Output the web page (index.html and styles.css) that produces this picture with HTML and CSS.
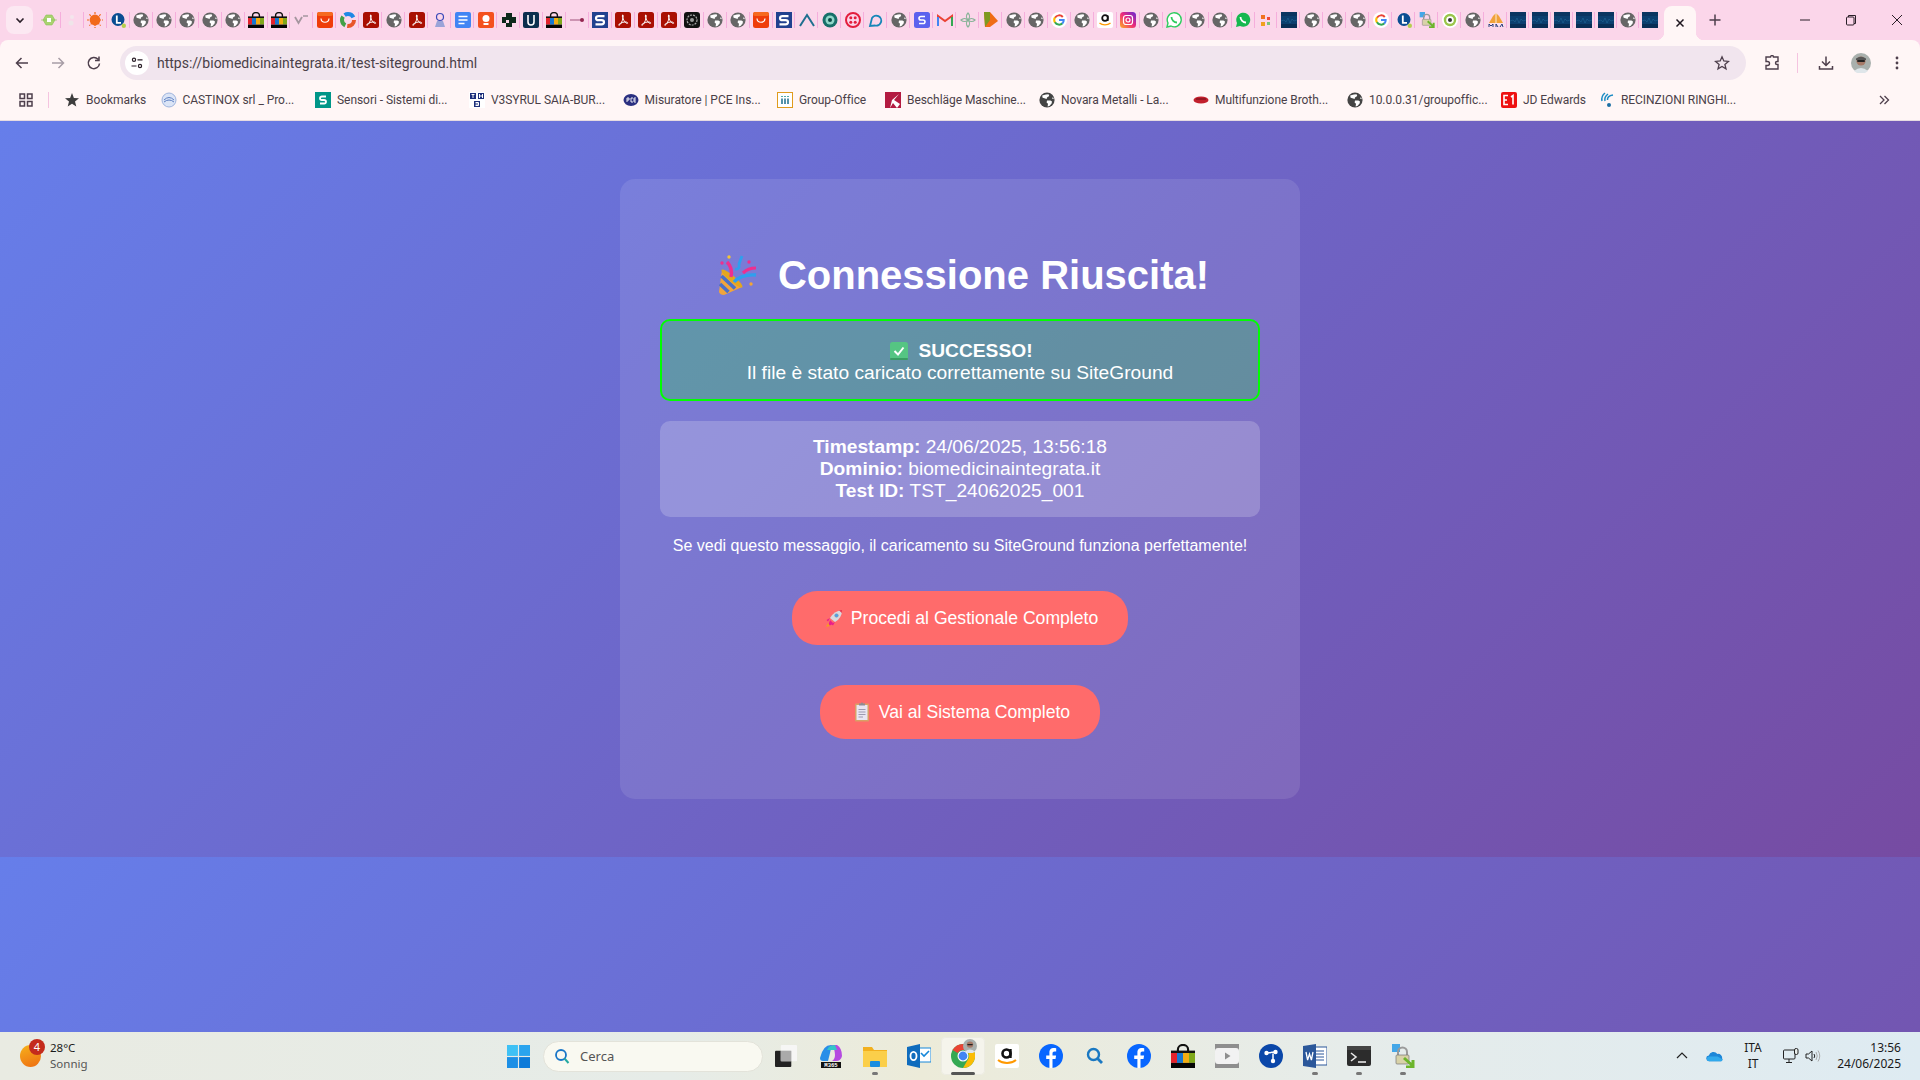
FILE: index.html
```html
<!DOCTYPE html>
<html lang="it">
<head>
<meta charset="utf-8">
<title>Test SiteGround</title>
<link rel="stylesheet" href="styles.css">
</head>
<body>
<svg class="defs" aria-hidden="true">
<defs>
<symbol id="globe" viewBox="0 0 16 16"><circle cx="8" cy="8" r="7.6" fill="currentColor"/><path d="M3.2 3.6 6.8 2.6 9.6 2.2 10.2 4 8 5.4 7.6 7 5.4 6.2 3.6 5.8Z M8 8.4 11.4 8.6 13 9.6 12.6 11.6 10.4 14 8.6 14.4 9 11.8 7.6 10.4Z M14 5 14.8 7.2 13 6.6Z" fill="#fff"/></symbol>
<symbol id="bag" viewBox="0 0 16 16"><path d="M4.6 5V3.6a3.4 3 0 0 1 6.8 0V5" fill="none" stroke="#111" stroke-width="1.4"/><rect y="4.4" width="16" height="2" fill="#111"/><rect y="6" width="4" height="6.6" fill="#e3222c"/><rect x="4" y="6" width="4" height="6.6" fill="#1677d2"/><rect x="8" y="6" width="4" height="6.6" fill="#f2ad12"/><rect x="12" y="6" width="4" height="6.6" fill="#7fa81b"/><rect y="12.6" width="16" height="3.4" fill="#050505"/></symbol>
<symbol id="pdf" viewBox="0 0 16 16"><rect width="16" height="16" rx="2.5" fill="#a90f02"/><path d="M7.6 3c-.8 1 .2 3.6 1.4 5.6 1 1.6 2.4 3 3.4 2.8.8-.2.2-1.2-1.4-1.4-2.4-.2-5.4.8-7 2.4-1 1 .2 1.2 1 .2C7 11 8.4 5.600 8.200 3.600 8.100 2.800 7.900 2.700 7.600 3Z" fill="none" stroke="#fff" stroke-width="1"/></symbol>
<symbol id="ali" viewBox="0 0 16 16"><rect width="16" height="16" rx="2.5" fill="#ef3d0a"/><rect width="16" height="4" rx="2" fill="#f66a1f"/><path d="M4 6.500c.4 5 7.600 5 8 0" fill="none" stroke="#fff" stroke-width="1.200"/></symbol>
<symbol id="s" viewBox="0 0 16 16"><rect width="16" height="16" fill="#21418f"/><path d="M12.500 4.200H6.500Q4 4.200 4 6.200T6.500 8.200H9.500Q12 8.200 12 10.200T9.500 12.400H3.500" fill="none" stroke="#fff" stroke-width="2.200"/></symbol>
<symbol id="wave" viewBox="0 0 16 16"><rect width="16" height="16" fill="#0b3f6f"/><path d="M0 9 3 8 5 10 7 6 9 11 11 7 13 9 16 8" fill="none" stroke="#2a7fb0" stroke-width=".5" opacity=".7"/><rect y="0" width="16" height="4" fill="#0a2f58" opacity=".6"/><rect y="12" width="16" height="4" fill="#072a50" opacity=".8"/></symbol>
<symbol id="gg" viewBox="0 0 16 16"><circle cx="8" cy="8" r="8" fill="#fff"/><path d="M11.800 5A4.800 4.800 0 0 0 4 5.800" fill="none" stroke="#ea4335" stroke-width="2"/><path d="M4 5.400A4.800 4.800 0 0 0 4 10.600" fill="none" stroke="#fbbc05" stroke-width="2"/><path d="M4 10.200A4.800 4.800 0 0 0 11.500 11.300" fill="none" stroke="#34a853" stroke-width="2"/><path d="M8 8h4.700a4.800 4.800 0 0 1-1.400 3.600" fill="none" stroke="#4285f4" stroke-width="2"/></symbol>
<symbol id="ell" viewBox="0 0 16 16"><path d="M8 1A6.500 6.500 0 1 0 8 14 6.500 6.500 0 0 0 8 1Z" fill="#0a4d92"/><path d="M6.800 3.500V10.800H11" fill="none" stroke="#fff" stroke-width="1.800"/><circle cx="13.800" cy="13.800" r="2.200" fill="#b6cf4d"/></symbol>
<symbol id="fb" viewBox="0 0 24 24"><circle cx="12" cy="12" r="12" fill="#0866ff"/><path d="M13.500 24v-9h3l.6-3.600h-3.600V9.400c0-1.200.6-2 2-2h1.700V4.300c-3.600-.8-6.800-.2-6.800 4.400v2.700H7.200V15h3.200v9Z" fill="#fff"/></symbol>
<symbol id="lockico" viewBox="0 0 24 24"><rect x="1" y="0" width="8" height="8" fill="#44a7e8"/><path d="M7 11V8a4.500 4.500 0 0 1 9 0v3" fill="none" stroke="#9a9a9a" stroke-width="2"/><rect x="5" y="11" width="13" height="9" rx="1" fill="#d8d2a8" stroke="#777" stroke-width=".7"/><path d="M13 14 22 22M22 16V23H15" fill="none" stroke="#6cb52c" stroke-width="3"/></symbol>
</defs>
</svg>

<div class="frame">
  <header class="tabstrip">
    <button class="tabsearch" type="button"><svg class="ico12" viewBox="0 0 12 12"><path d="M2.500 4.500 6 8l3.500-3.500" fill="none" stroke="#2a1f28" stroke-width="1.600"/></svg></button>
    <div class="tabs">
      <span class="tab"><svg class="fav" viewBox="0 0 16 16"><path d="M0 8h16M5 3h6l3 5-3 5H5L2 8Z" fill="#a9d36f" stroke="#8cc157" stroke-width=".6"/><rect x="6" y="6" width="4" height="4" fill="#fff"/></svg></span>
      <span class="tab"><svg class="fav" viewBox="0 0 16 16"><circle cx="8" cy="5" r="2" fill="#f3e6ec"/><circle cx="7" cy="11" r="2.500" fill="#efe5e9"/></svg></span>
      <span class="tab"><svg class="fav" viewBox="0 0 16 16"><circle cx="8" cy="8" r="5.400" fill="#f26a1b"/><path d="M8 0v16M0 8h16M2.400 2.400l11.200 11.200M13.600 2.400 2.400 13.600" stroke="#f26a1b" stroke-width="1.200" stroke-dasharray="2 1"/></svg></span>
      <span class="tab"><svg class="fav"><use href="#ell"/></svg></span>
      <span class="tab"><svg class="fav globe"><use href="#globe"/></svg></span>
      <span class="tab"><svg class="fav globe"><use href="#globe"/></svg></span>
      <span class="tab"><svg class="fav globe"><use href="#globe"/></svg></span>
      <span class="tab"><svg class="fav globe"><use href="#globe"/></svg></span>
      <span class="tab"><svg class="fav globe"><use href="#globe"/></svg></span>
      <span class="tab"><svg class="fav"><use href="#bag"/></svg></span>
      <span class="tab"><svg class="fav"><use href="#bag"/></svg></span>
      <span class="tab"><svg class="fav" viewBox="0 0 16 16"><path d="M1 5l3.500 6L8 5" fill="none" stroke="#a5969f" stroke-width="1.800"/><path d="M9 4h5" stroke="#a5969f" stroke-width="1.500"/></svg></span>
      <span class="tab"><svg class="fav"><use href="#ali"/></svg></span>
      <span class="tab"><svg class="fav" viewBox="0 0 16 16"><circle cx="8" cy="8" r="6" fill="none" stroke="#e8562a" stroke-width="4" stroke-dasharray="10 28"/><circle cx="8" cy="8" r="6" fill="none" stroke="#43a047" stroke-width="4" stroke-dasharray="10 28" stroke-dashoffset="-12"/><circle cx="8" cy="8" r="6" fill="none" stroke="#1e88e5" stroke-width="4" stroke-dasharray="10 28" stroke-dashoffset="-24"/></svg></span>
      <span class="tab"><svg class="fav"><use href="#pdf"/></svg></span>
      <span class="tab"><svg class="fav globe"><use href="#globe"/></svg></span>
      <span class="tab"><svg class="fav"><use href="#pdf"/></svg></span>
      <span class="tab"><svg class="fav" viewBox="0 0 16 16"><circle cx="8" cy="5" r="3.500" fill="none" stroke="#3a49b8" stroke-width="1.200"/><path d="M5 9h6l2 6H3Z" fill="#9aa3d8"/></svg></span>
      <span class="tab"><svg class="fav" viewBox="0 0 16 16"><rect width="16" height="16" rx="2" fill="#4285f4"/><path d="M3.500 4.500h9M3.500 8h9M3.500 11.500h6" stroke="#fff" stroke-width="1.500"/></svg></span>
      <span class="tab"><svg class="fav" viewBox="0 0 16 16"><rect width="16" height="16" rx="2" fill="#f4511e"/><circle cx="8" cy="6.500" r="3.500" fill="#fff"/><rect x="5.500" y="11" width="5" height="2" fill="#fff"/></svg></span>
      <span class="tab"><svg class="fav" viewBox="0 0 16 16"><path d="M5 1h6v4h4v6h-4v4H5v-4h3V8H5v3H1V5h4Z" fill="#0e2a1c"/></svg></span>
      <span class="tab"><svg class="fav" viewBox="0 0 16 16"><rect width="16" height="16" rx="2" fill="#0b2f4e"/><path d="M5 3v7a3 3 0 0 0 6 0V3" fill="none" stroke="#fff" stroke-width="1.600"/></svg></span>
      <span class="tab"><svg class="fav"><use href="#bag"/></svg></span>
      <span class="tab"><svg class="fav" viewBox="0 0 16 16"><path d="M1 8h11" stroke="#b0688c" stroke-width="1.200"/><circle cx="13" cy="8" r="2" fill="#93244f"/></svg></span>
      <span class="tab"><svg class="fav"><use href="#s"/></svg></span>
      <span class="tab"><svg class="fav"><use href="#pdf"/></svg></span>
      <span class="tab"><svg class="fav"><use href="#pdf"/></svg></span>
      <span class="tab"><svg class="fav"><use href="#pdf"/></svg></span>
      <span class="tab"><svg class="fav" viewBox="0 0 16 16"><rect width="16" height="16" rx="3" fill="#111"/><circle cx="8" cy="8" r="5" fill="none" stroke="#aaa" stroke-width="1.200" stroke-dasharray="2 1"/><circle cx="8" cy="8" r="2" fill="#999"/></svg></span>
      <span class="tab"><svg class="fav globe"><use href="#globe"/></svg></span>
      <span class="tab"><svg class="fav globe"><use href="#globe"/></svg></span>
      <span class="tab"><svg class="fav"><use href="#ali"/></svg></span>
      <span class="tab"><svg class="fav"><use href="#s"/></svg></span>
      <span class="tab"><svg class="fav" viewBox="0 0 16 16"><path d="M1 14 8 3l7 11" fill="none" stroke="#1f6f8f" stroke-width="2"/></svg></span>
      <span class="tab"><svg class="fav" viewBox="0 0 16 16"><circle cx="8" cy="8" r="7.500" fill="#16706a"/><circle cx="8" cy="8" r="4.500" fill="#8fd8c9"/><circle cx="8" cy="8" r="2" fill="#0a4b46"/></svg></span>
      <span class="tab"><svg class="fav" viewBox="0 0 16 16"><circle cx="8" cy="8" r="7" fill="none" stroke="#e31e3d" stroke-width="2"/><circle cx="5.800" cy="5.800" r="1.500" fill="#e31e3d"/><circle cx="10.200" cy="5.800" r="1.500" fill="#e31e3d"/><circle cx="5.800" cy="10.200" r="1.500" fill="#e31e3d"/><circle cx="10.200" cy="10.200" r="1.500" fill="#e31e3d"/></svg></span>
      <span class="tab"><svg class="fav" viewBox="0 0 16 16"><path d="M2 14 4 6a5 5 0 1 1 3 7.500Z" fill="none" stroke="#1686b8" stroke-width="1.800"/></svg></span>
      <span class="tab"><svg class="fav globe"><use href="#globe"/></svg></span>
      <span class="tab"><svg class="fav" viewBox="0 0 16 16"><rect width="16" height="16" rx="2.500" fill="#5b62ee"/><path d="M11 4.500H7Q5 4.500 5 6.200T7 8h2q2 0 2 1.800T9 11.500H5" fill="none" stroke="#fff" stroke-width="1.600"/></svg></span>
      <span class="tab"><svg class="fav" viewBox="0 0 16 16"><path d="M1 14V4l7 5 7-5v10" fill="none" stroke="#ea4335" stroke-width="2"/><path d="M1 14V5" stroke="#4285f4" stroke-width="2"/><path d="M15 14V5" stroke="#34a853" stroke-width="2"/></svg></span>
      <span class="tab"><svg class="fav" viewBox="0 0 16 16"><g fill="none" stroke="#88b398" stroke-width="1.200"><path d="M8 8c-2-2-2-5 0-7 2 2 2 5 0 7Z"/><path d="M8 8c2-2 5-2 7 0-2 2-5 2-7 0Z"/><path d="M8 8c2 2 2 5 0 7-2-2-2-5 0-7Z"/><path d="M8 8c-2 2-5 2-7 0 2-2 5-2 7 0Z"/></g></svg></span>
      <span class="tab"><svg class="fav" viewBox="0 0 16 16"><path d="M1 0h6l8 9-8 6H2Z" fill="#ef6c15"/><path d="M1 0h6v8l-5 7Z" fill="#7d9a20"/></svg></span>
      <span class="tab"><svg class="fav globe"><use href="#globe"/></svg></span>
      <span class="tab"><svg class="fav globe"><use href="#globe"/></svg></span>
      <span class="tab"><svg class="fav"><use href="#gg"/></svg></span>
      <span class="tab"><svg class="fav globe"><use href="#globe"/></svg></span>
      <span class="tab"><svg class="fav" viewBox="0 0 16 16"><rect width="16" height="16" rx="2" fill="#fff"/><circle cx="8" cy="6" r="2.800" fill="none" stroke="#111" stroke-width="1.800"/><path d="M10.800 3.500v5.500" stroke="#111" stroke-width="1.600"/><path d="M2.500 11c3 2.500 8 2.500 11 0" fill="none" stroke="#f90" stroke-width="1.400"/></svg></span>
      <span class="tab"><svg class="fav" viewBox="0 0 16 16"><defs><linearGradient id="ig" x1="0" y1="1" x2="1" y2="0"><stop offset="0" stop-color="#fdb022"/><stop offset=".5" stop-color="#ee2a7b"/><stop offset="1" stop-color="#6228d7"/></linearGradient></defs><rect width="16" height="16" rx="3.500" fill="url(#ig)"/><rect x="3.500" y="3.500" width="9" height="9" rx="2.500" fill="none" stroke="#fff" stroke-width="1.200"/><circle cx="8" cy="8" r="2" fill="none" stroke="#fff" stroke-width="1.200"/></svg></span>
      <span class="tab"><svg class="fav globe"><use href="#globe"/></svg></span>
      <span class="tab"><svg class="fav" viewBox="0 0 16 16"><path d="M1 15l1-4A7 7 0 1 1 5 14Z" fill="#fff" stroke="#2ecc5f" stroke-width="1.400"/><path d="M5.500 5c0 3 2.500 5.500 5.500 5.500" fill="none" stroke="#2ecc5f" stroke-width="1.800"/></svg></span>
      <span class="tab"><svg class="fav globe"><use href="#globe"/></svg></span>
      <span class="tab"><svg class="fav globe"><use href="#globe"/></svg></span>
      <span class="tab"><svg class="fav" viewBox="0 0 16 16"><path d="M1 15l1-4A7 7 0 1 1 5 14Z" fill="#16b84f"/><path d="M5.500 5c0 3 2.500 5.500 5.500 5.500" fill="none" stroke="#fff" stroke-width="1.800"/></svg></span>
      <span class="tab"><svg class="fav" viewBox="0 0 16 16"><rect x="3" y="3" width="4" height="4" fill="#f0731f"/><rect x="9" y="5" width="3" height="3" fill="#f04c3a"/><rect x="3" y="10" width="4" height="4" fill="#f0a01f"/><rect x="9" y="10" width="3" height="3" fill="#7bc67b"/></svg></span>
      <span class="tab"><svg class="fav"><use href="#wave"/></svg></span>
      <span class="tab"><svg class="fav globe"><use href="#globe"/></svg></span>
      <span class="tab"><svg class="fav globe"><use href="#globe"/></svg></span>
      <span class="tab"><svg class="fav globe"><use href="#globe"/></svg></span>
      <span class="tab"><svg class="fav"><use href="#gg"/></svg></span>
      <span class="tab"><svg class="fav"><use href="#ell"/></svg></span>
      <span class="tab"><svg class="fav"><use href="#lockico"/></svg></span>
      <span class="tab"><svg class="fav" viewBox="0 0 16 16"><circle cx="8" cy="8" r="8" fill="#fff"/><circle cx="8" cy="8" r="5" fill="none" stroke="#9ac54a" stroke-width="2.400"/><circle cx="8" cy="8" r="2" fill="#333"/></svg></span>
      <span class="tab"><svg class="fav globe"><use href="#globe"/></svg></span>
      <span class="tab"><svg class="fav" viewBox="0 0 16 16"><path d="M1 11 5 4l3-3 3 3 4 7Z" fill="#f0a23a"/><path d="M8 1v10" stroke="#fff" stroke-width=".8"/><rect y="11" width="16" height="4" fill="#fbe0ee"/><path d="M1 15v-3l2 2 2-2v3M8 15V12l2 3M12 15l2-3 1 3" fill="none" stroke="#253a7b" stroke-width="1"/></svg></span>
      <span class="tab tab-n"><svg class="fav"><use href="#wave"/></svg></span>
      <span class="tab tab-n"><svg class="fav"><use href="#wave"/></svg></span>
      <span class="tab tab-n"><svg class="fav"><use href="#wave"/></svg></span>
      <span class="tab tab-n"><svg class="fav"><use href="#wave"/></svg></span>
      <span class="tab tab-n"><svg class="fav"><use href="#wave"/></svg></span>
      <span class="tab tab-n"><svg class="fav globe"><use href="#globe"/></svg></span>
      <span class="tab tab-n"><svg class="fav"><use href="#wave"/></svg></span>
    </div>
    <div class="activetab"><svg class="ico12" viewBox="0 0 12 12"><path d="M2.500 2.500l7 7M9.500 2.500l-7 7" stroke="#1f1720" stroke-width="1.500"/></svg></div>
    <svg class="ico14 newtab" viewBox="0 0 14 14"><path d="M7 1.500v11M1.500 7h11" stroke="#4e3f4c" stroke-width="1.500"/></svg>
    <div class="winctl">
      <svg class="ico12" viewBox="0 0 12 12"><path d="M1 6h10" stroke="#2a1f28"/></svg>
      <svg class="ico12" viewBox="0 0 12 12"><rect x="1.500" y="3" width="7.500" height="8" rx="1" fill="none" stroke="#2a1f28"/><path d="M3.500 3V1.500h7v8H9" fill="none" stroke="#2a1f28"/></svg>
      <svg class="ico12" viewBox="0 0 12 12"><path d="M1 1l10 10M11 1 1 11" stroke="#2a1f28"/></svg>
    </div>
  </header>

  <div class="chrome">
    <nav class="toolbar">
      <div class="navbtns">
        <svg class="ico16" viewBox="0 0 16 16"><path d="M14 8H2.500M7.500 3l-5 5 5 5" fill="none" stroke="#4e3f4c" stroke-width="1.500"/></svg>
        <svg class="ico16" viewBox="0 0 16 16"><path d="M2 8h11.500M8.500 3l5 5-5 5" fill="none" stroke="#a89da6" stroke-width="1.500"/></svg>
        <svg class="ico16" viewBox="0 0 16 16"><path d="M13.500 8.500A5.600 5.600 0 1 1 12 4.200M13 1.500v4H9" fill="none" stroke="#4e3f4c" stroke-width="1.500"/></svg>
      </div>
      <div class="omnibox">
        <span class="siteinfo"><svg class="ico14" viewBox="0 0 14 14"><circle cx="4" cy="3.800" r="1.600" fill="none" stroke="#2a1f28" stroke-width="1.200"/><path d="M7.500 3.800h5M1.500 10h5" stroke="#2a1f28" stroke-width="1.200"/><circle cx="10" cy="10" r="1.600" fill="none" stroke="#2a1f28" stroke-width="1.200"/></svg></span>
        <span class="url">https://biomedicinaintegrata.it/test-siteground.html</span>
        <svg class="ico16 staricon" viewBox="0 0 16 16"><path d="M8 1.800 9.800 6l4.600.4-3.500 3 1.100 4.500L8 11.500l-4 2.400 1.100-4.500-3.500-3L6.200 6Z" fill="none" stroke="#4e3f4c" stroke-width="1.300"/></svg>
      </div>
      <div class="tools">
        <svg class="ico16" viewBox="0 0 16 16"><path d="M2 2h4.500a1.500 1.500 0 0 1 3 0H14v4.500h-1a1.500 1.500 0 0 0 0 3h1V14H2v-3.500h1.500a2 2 0 0 0 0-4H2Z" fill="none" stroke="#4e3f4c" stroke-width="1.400"/></svg>
        <span class="toolsep"></span>
        <svg class="ico16" viewBox="0 0 16 16"><path d="M8 1.500V10M4 6.500 8 10.500l4-4M1.500 11v3h13v-3" fill="none" stroke="#4e3f4c" stroke-width="1.500"/></svg>
        <svg class="avatar" viewBox="0 0 20 20"><circle cx="10" cy="10" r="10" fill="#a9b0ad"/><circle cx="10" cy="8" r="4.600" fill="#a67a68"/><path d="M5 5.500Q10 2 15 5.500V7H5Z" fill="#555"/><rect x="6" y="7" width="8" height="2" rx="1" fill="#222"/><path d="M3 18q7-6 14 0l-3 2H6Z" fill="#dfe6ea"/></svg>
        <svg class="ico16" viewBox="0 0 16 16"><circle cx="8" cy="3" r="1.400" fill="#4e3f4c"/><circle cx="8" cy="8" r="1.400" fill="#4e3f4c"/><circle cx="8" cy="13" r="1.400" fill="#4e3f4c"/></svg>
      </div>
    </nav>
    <div class="bookmarks">
      <svg class="ico14 appsicon" viewBox="0 0 14 14"><path d="M1 1h4.500v4.500H1ZM8.500 1H13v4.500H8.500ZM1 8.500h4.500V13H1ZM8.500 8.500H13V13H8.500Z" fill="none" stroke="#4e3f4c" stroke-width="1.500"/></svg>
      <span class="bmsep"></span>
      <span class="bm w1"><svg class="bmi" viewBox="0 0 16 16"><path d="M8 1 9.900 5.900 15 6.200 11 9.500 12.300 14.500 8 11.700 3.700 14.500 5 9.500 1 6.200 6.100 5.900Z" fill="#3d3d3d"/></svg>Bookmarks</span>
      <span class="bm w2"><svg class="bmi" viewBox="0 0 16 16"><circle cx="8" cy="8" r="7" fill="#dbe4f6" stroke="#9fb4dd"/><path d="M3 8q5-5 10 0M3 10q5-4 10 0" fill="none" stroke="#5d7fc2"/></svg>CASTINOX srl _ Pro...</span>
      <span class="bm w3"><svg class="bmi" viewBox="0 0 16 16"><rect width="16" height="16" fill="#009688"/><path d="M11 4.500H7Q5 4.500 5 6.200T7 8h2q2 0 2 1.800T9 11.500H5" fill="none" stroke="#fff" stroke-width="1.800"/></svg>Sensori - Sistemi di...</span>
      <span class="bm w4"><svg class="bmi" viewBox="0 0 16 16"><rect width="16" height="16" fill="#fff"/><path d="M1 1h6v6H1ZM9 1h6v6H9ZM5 9h6v6H5Z" fill="#1d2f7a"/><path d="M2.500 2.500h3M4 2.500V6M10.500 2v4M13.500 2v4M10.500 4h3M6.500 10.500h3v3h-3M6.500 12h2.500" fill="none" stroke="#fff"/></svg>V3SYRUL SAIA-BUR...</span>
      <span class="bm w5"><svg class="bmi" viewBox="0 0 16 16"><ellipse cx="8" cy="8" rx="7.500" ry="6" fill="#2a2f80"/><path d="M4 6v4M4 6h2v2H4M10 6H8v4h2M13 6h-2v4h2M11 8h2" fill="none" stroke="#fff" stroke-width=".9"/></svg>Misuratore | PCE Ins...</span>
      <span class="bm w6"><svg class="bmi" viewBox="0 0 16 16"><rect x=".5" y=".5" width="15" height="15" fill="#fff" stroke="#e09b1d"/><path d="M5 4v1M8 4v1M11 4v1" stroke="#1d8f8f" stroke-width="1.500"/><path d="M5 6.500V12M8 6.500V12M11 6.500V12" stroke="#1d6f8f" stroke-width="1.500"/></svg>Group-Office</span>
      <span class="bm w7"><svg class="bmi" viewBox="0 0 16 16"><rect width="16" height="16" fill="#b31b41"/><path d="M5 16 7 8 14 2 9 8l6 4-3 4-4-5Z" fill="#fff"/></svg>Beschläge Maschine...</span>
      <span class="bm w8"><svg class="bmi g2"><use href="#globe"/></svg>Novara Metalli - La...</span>
      <span class="bm w9"><svg class="bmi" viewBox="0 0 16 16"><ellipse cx="8" cy="8" rx="7.500" ry="3.600" fill="#c21f2c"/><path d="M3 7h10" stroke="#6d0f18"/></svg>Multifunzione Broth...</span>
      <span class="bm w10"><svg class="bmi g2"><use href="#globe"/></svg>10.0.0.31/groupoffic...</span>
      <span class="bm w11"><svg class="bmi" viewBox="0 0 16 16"><rect width="16" height="16" rx="2" fill="#ee1111"/><path d="M7 3.500H3v9h4M3 8h3M10 5l2-1.500v9" fill="none" stroke="#fff" stroke-width="1.600"/></svg>JD Edwards</span>
      <span class="bm w12"><svg class="bmi" viewBox="0 0 16 16"><path d="M6 1Q2 4 3 9M9 2Q5 5 6 9M14 3Q8 4 8.500 8" fill="none" stroke="#1c8cc4" stroke-width="1.500"/><circle cx="10" cy="13" r="2" fill="#1c6fa4"/></svg>RECINZIONI RINGHI...</span>
      <svg class="ico12 bmmore" viewBox="0 0 12 12"><path d="M2 2l4 4-4 4M6.500 2l4 4-4 4" fill="none" stroke="#4e3f4c" stroke-width="1.300"/></svg>
    </div>
  </div>

  <main class="page">
    <section class="card">
      <h1 class="title"><svg class="emoji-title" viewBox="0 0 38 40"><path d="M0 37 3 15 23 32 5 40Q1 40 0 37Z" fill="#f0a53c"/><path d="M2.500 21 16 33.500M1 29 9.500 37" stroke="#4a70c8" stroke-width="3.600"/><ellipse cx="13" cy="23.500" rx="3" ry="13.500" transform="rotate(-50 13 23.500)" fill="#e3a71e"/><path d="M8 7Q14 13 12 22" fill="none" stroke="#ee2f8f" stroke-width="3.400"/><path d="M24 18q5-5 13-5" fill="none" stroke="#ee2f8f" stroke-width="3.200"/><path d="M15 27q7-8 22-7" fill="none" stroke="#2f9fee" stroke-width="3.400"/><path d="M16 14q5 1 4-5l3-8" fill="none" stroke="#2f9fee" stroke-width="2.800"/><circle cx="10" cy="2" r="1.700" fill="#f4c534"/><circle cx="3" cy="8" r="1.700" fill="#ee2f8f"/><circle cx="30" cy="7" r="1.700" fill="#ee2f8f"/><circle cx="32" cy="29" r="1.700" fill="#f4a534"/></svg> Connessione Riuscita!</h1>
      <div class="success">
        <div class="success-head"><svg class="emoji-check" viewBox="0 0 18 18"><rect width="18" height="18" rx="2.500" fill="#55c583"/><rect y="16" width="18" height="2" rx="1" fill="#3a9c63"/><path d="M4.500 9 8 12.500l5.500-7" fill="none" stroke="#fff" stroke-width="2"/></svg> <strong>SUCCESSO!</strong></div>
        <div>Il file è stato caricato correttamente su SiteGround</div>
      </div>
      <div class="info">
        <div><strong>Timestamp:</strong> 24/06/2025, 13:56:18</div>
        <div><strong>Dominio:</strong> biomedicinaintegrata.it</div>
        <div><strong>Test ID:</strong> TST_24062025_001</div>
      </div>
      <p class="note">Se vedi questo messaggio, il caricamento su SiteGround funziona perfettamente!</p>
      <div class="actions">
        <a class="btn" href="#"><svg class="emoji-btn" viewBox="0 0 18 20"><path d="M5 10Q9 3 17 2q0 8-7 12Z" fill="#d8dadf"/><path d="M14 2.300 17 2l-.2 3Z" fill="#e8344e"/><circle cx="11.500" cy="7.500" r="1.800" fill="#4aa3e8" stroke="#8a93a0" stroke-width=".5"/><path d="M5 10 1.500 12 3 13.500M10 14 8 17.500 6 16" fill="#e91e8c"/><path d="M5 12q2 2 3 3l-2 2-3 1 1-3Z" fill="#e91e8c"/><path d="M3 15 1 19l4-1Z" fill="#f59a23"/></svg> Procedi al Gestionale Completo</a>
        <a class="btn" href="#"><svg class="emoji-btn" viewBox="0 0 18 20"><rect x="2" y="1.500" width="14" height="18" rx="1" fill="#d9a066"/><rect x="3.500" y="3" width="11" height="15" fill="#e9e6f2"/><path d="M5.500 7.500h7M5.500 10h7M5.500 12.500h7M5.500 15h4.500" stroke="#9d9ab0"/><path d="M6 3.500V1.500h2L9 0l1 1.500h2V3.500Z" fill="#8f8a94"/></svg> Vai al Sistema Completo</a>
      </div>
    </section>
  </main>

  <footer class="taskbar">
    <div class="weather">
      <span class="weathericon"><span class="badge">4</span></span>
      <div class="weathertext"><div>28°C</div><div class="muted">Sonnig</div></div>
    </div>
    <div class="taskcenter">
      <svg class="winlogo" viewBox="0 0 24 24"><rect width="11.400" height="11.400" fill="#3ec1f5"/><rect x="12.600" width="11.400" height="11.400" fill="#2aa4ee"/><rect y="12.600" width="11.400" height="11.400" fill="#1c8fe6"/><rect x="12.600" y="12.600" width="11.400" height="11.400" fill="#0d7bd9"/></svg>
      <div class="searchbox"><svg class="ico16" viewBox="0 0 16 16"><circle cx="7" cy="7" r="5" fill="none" stroke="#1976c8" stroke-width="1.800"/><path d="M10.500 10.500 14.500 15" stroke="#23a9a0" stroke-width="2"/></svg><span>Cerca</span></div>
      <svg class="taskview" viewBox="0 0 24 24"><rect y="6" width="17" height="17" rx="1" fill="#222"/><rect x="6" y="0" width="17" height="17" rx="1" fill="#f8f8f8" fill-opacity=".85"/><rect x="6" y="6" width="11" height="11" fill="#aaa"/></svg>
      <span class="ti"><svg class="ticon" viewBox="0 0 24 24"><path d="M1 14Q4 1 12 1h5q-5 1-6 8l-2 8H4Q1 17 1 14Z" fill="#2a8ee8"/><path d="M12 1h6q5 3 5 11-1 5-6 5h-4q3-2 3-6 0-6-4-10Z" fill="#b54be0"/><path d="M8 6q2-5 8-5l2 5Z" fill="#33c5c8"/><rect x="2" y="18" width="20" height="6" fill="#111"/><text class="m365" x="12" y="23.200" text-anchor="middle">M365</text></svg></span>
      <span class="ti on"><svg class="ticon" viewBox="0 0 24 24"><path d="M0 3h9l2 3h13v17H0Z" fill="#f2b01e"/><rect y="7" width="24" height="16" fill="#fbcf4a"/><rect x="7" y="17" width="10" height="6" rx="1" fill="#1a8de0"/></svg></span>
      <span class="ti"><svg class="ticon" viewBox="0 0 24 24"><rect x="11" y="4" width="13" height="14" fill="#fff" stroke="#1687d9"/><path d="M14 9l3 3 5-5" fill="none" stroke="#1687d9" stroke-width="1.600"/><path d="M0 3 13 0v24L0 21Z" fill="#0f6cbd"/><ellipse cx="6.500" cy="12" rx="3" ry="4.200" fill="none" stroke="#fff" stroke-width="1.800"/></svg></span>
      <span class="ti chrome-ti"><svg class="ticon" viewBox="0 0 24 24"><circle cx="12" cy="12" r="12" fill="#34a853"/><path d="M12 0a12 12 0 0 1 10.400 6H12a6 6 0 0 0-5.200 3L1.600 6A12 12 0 0 1 12 0Z" fill="#ea4335"/><path d="M22.400 6a12 12 0 0 1-10.400 18l5.200-9a6 6 0 0 0 0-6Z" fill="#fbbc05"/><circle cx="12" cy="12" r="5.500" fill="#fff"/><circle cx="12" cy="12" r="4.400" fill="#4285f4"/></svg><svg class="overlay-avatar" viewBox="0 0 20 20"><circle cx="10" cy="10" r="10" fill="#a9b0ad"/><circle cx="10" cy="8" r="4.600" fill="#a67a68"/><rect x="6" y="7" width="8" height="2" rx="1" fill="#222"/><path d="M3 18q7-6 14 0l-3 2H6Z" fill="#dfe6ea"/></svg></span>
      <span class="ti"><svg class="ticon" viewBox="0 0 24 24"><rect width="24" height="24" rx="2" fill="#fff"/><circle cx="11.500" cy="9.500" r="4" fill="none" stroke="#111" stroke-width="2.600"/><path d="M15.500 5v9" stroke="#111" stroke-width="2.400"/><path d="M3 16c5 4 13 4 18 0" fill="none" stroke="#f90" stroke-width="2"/></svg></span>
      <span class="ti"><svg class="ticon"><use href="#fb"/></svg></span>
      <span class="ti"><svg class="ticon" viewBox="0 0 24 24"><circle cx="10.500" cy="10.500" r="5.500" fill="none" stroke="#1a78c2" stroke-width="2.400"/><path d="M14.500 14.500 19 19" stroke="#1a78c2" stroke-width="2.800"/></svg></span>
      <span class="ti"><svg class="ticon"><use href="#fb"/></svg></span>
      <span class="ti"><svg class="ticon"><use href="#bag"/></svg></span>
      <span class="ti"><svg class="ticon" viewBox="0 0 24 24"><rect width="24" height="24" fill="#8e8e8e"/><rect y="4" width="24" height="16" rx="3" fill="#f2f2f2"/><path d="M10 8.500v7l5.500-3.500Z" fill="#8e8e8e"/></svg></span>
      <span class="ti"><svg class="ticon" viewBox="0 0 24 24"><circle cx="12" cy="12" r="12" fill="#0a47a9"/><circle cx="7.500" cy="9" r="2.200" fill="#fff"/><circle cx="16.500" cy="8" r="2.200" fill="#fff"/><circle cx="14" cy="17" r="2.200" fill="#fff"/><path d="M7.500 9l9-1M14 9.500V17" fill="none" stroke="#fff" stroke-width="1.500"/></svg></span>
      <span class="ti on"><svg class="ticon" viewBox="0 0 24 24"><rect x="9" y="3" width="15" height="18" fill="#fff" stroke="#2b579a"/><path d="M13 7h8M13 10h8M13 13h8M13 16h8" stroke="#2b579a"/><path d="M0 2 13 0v24L0 22Z" fill="#2b579a"/><path d="M3 8l1.600 8 1.900-6 1.900 6L10 8" fill="none" stroke="#fff" stroke-width="1.300"/></svg></span>
      <span class="ti on"><svg class="ticon" viewBox="0 0 24 24"><rect y="2" width="24" height="20" rx="2" fill="#2c2c2c"/><rect y="2" width="24" height="4" fill="#444"/><path d="M4 9l5 4-5 4" fill="none" stroke="#e8e8e8" stroke-width="1.600"/><path d="M11 18h8" stroke="#e8e8e8" stroke-width="1.600"/></svg></span>
      <span class="ti on"><svg class="ticon"><use href="#lockico"/></svg></span>
    </div>
    <div class="tray">
      <svg class="ico12 traych" viewBox="0 0 12 12"><path d="M1 8l5-5 5 5" fill="none" stroke="#222" stroke-width="1.200"/></svg>
      <svg class="onedrive" viewBox="0 0 18 12"><path d="M3.500 11.500a3 3 0 0 1-.5-6 5 5 0 0 1 9-1.600 4 4 0 0 1 5 4.600 2 2 0 0 1-1 3Z" fill="#1c86d8"/><path d="M3.500 11.500a2.500 2.500 0 0 1-.2-5h9l5 3a2 2 0 0 1-1 2Z" fill="#30a9ec"/></svg>
      <div class="lang"><div>ITA</div><div>IT</div></div>
      <svg class="ico16 net" viewBox="0 0 16 16"><rect x=".5" y="2" width="11.500" height="9" rx="1" fill="none" stroke="#222"/><path d="M6 11v3M3 14.500h6" stroke="#222"/><rect x="11.500" y=".5" width="3.500" height="6" rx="1.500" fill="#e9edea" stroke="#222"/></svg>
      <svg class="ico16 spk" viewBox="0 0 16 16"><path d="M1 6h2.500L7 3v10L3.500 10H1Z" fill="none" stroke="#222"/><path d="M9 6q1.500 2 0 4" fill="none" stroke="#222"/><path d="M11 4q2.500 4 0 8M13 2.500q3.500 5.500 0 11" fill="none" stroke="#aaa"/></svg>
      <div class="clock"><div>13:56</div><div>24/06/2025</div></div>
    </div>
  </footer>
</div>
</body>
</html>
```

FILE: styles.css
```css
* { box-sizing: border-box; }
html, body { margin: 0; height: 100%; }
body { overflow: hidden; font-family: "Roboto", "Noto Sans", sans-serif; color: #2a1f28; }
svg { display: block; flex: none; }
.defs { position: absolute; width: 0; height: 0; }
.ico12 { width: 12px; height: 12px; }
.ico14 { width: 14px; height: 14px; }
.ico16 { width: 16px; height: 16px; }

.frame { height: 100vh; display: flex; flex-direction: column; background: #fbd6ea; }

/* tab strip */
.tabstrip { height: 40px; flex: none; display: flex; align-items: center; background: #fbd6ea; padding-left: 6px; }
.tabsearch { width: 27px; height: 28px; margin-right: 5px; padding: 0; border: 0; border-radius: 8px; background: #fce8f2; display: flex; align-items: center; justify-content: center; }
.tabs { display: flex; align-items: center; }
.tab { width: 22.96px; height: 16px; display: flex; justify-content: center; position: relative; }
.tab-n { width: 22px; }
.tab + .tab::before { content: ""; position: absolute; left: -1px; top: 0; width: 1px; height: 16px; background: #f5aedc; }
.fav { width: 16px; height: 16px; }
.globe { color: #666; }
.activetab { width: 32px; height: 34px; margin: 6px 0 0 3px; align-self: flex-start; background: #fff6f6; border-radius: 8px 8px 0 0; display: flex; align-items: center; justify-content: center; position: relative; }
.activetab::before, .activetab::after { content: ""; position: absolute; bottom: 0; width: 8px; height: 8px; }
.activetab::before { left: -8px; background: radial-gradient(circle at 0 0, transparent 8px, #fff6f6 8.5px); }
.activetab::after { right: -8px; background: radial-gradient(circle at 100% 0, transparent 8px, #fff6f6 8.5px); }
.newtab { margin-left: 12px; }
.winctl { margin-left: auto; padding-right: 17px; display: flex; gap: 34px; }

/* toolbar */
.chrome { flex: none; background: #fff6f6; border-radius: 8px 8px 0 0; border-bottom: 1px solid #e6dbe1; }
.toolbar { height: 46px; display: flex; align-items: center; padding-left: 14px; }
.navbtns { width: 106px; display: flex; justify-content: flex-start; gap: 20px; flex: none; }
.omnibox { width: 1626px; height: 34px; border-radius: 17px; background: #f1e5ee; display: flex; align-items: center; padding: 0 16px 0 5px; }
.siteinfo { width: 24px; height: 24px; border-radius: 50%; background: #fff; display: flex; align-items: center; justify-content: center; }
.url { margin-left: 8px; font-size: 14px; color: #4a3f48; }
.staricon { margin-left: auto; }
.tools { flex: 1; display: flex; align-items: center; padding-left: 18px; }
.toolsep { width: 1px; height: 20px; background: #f5c4e0; margin: 0 0 0 17px; }
.tools .ico16:nth-of-type(2) { margin-left: 20px; }
.avatar { width: 20px; height: 20px; margin-left: 17px; }
.tools .ico16:last-child { margin-left: 18px; }

/* bookmarks */
.bookmarks { height: 34px; display: flex; align-items: center; padding: 0 0 6px 19px; font-size: 12px; color: #4a3f48; }
.appsicon { flex: none; }
.bmsep { width: 1px; height: 16px; background: #f5c4e0; margin: 0 15px 0 15px; }
.bm { display: flex; align-items: center; gap: 6px; white-space: nowrap; overflow: hidden; flex: none; letter-spacing: -.05px; }
.bmi { width: 16px; height: 16px; }
.g2 { color: #444; }
.w1 { width: 96.5px; }
.w2 { width: 154.5px; }
.w3 { width: 154px; }
.w4 { width: 153.600px; }
.w5 { width: 154.400px; }
.w6 { width: 108px; }
.w7 { width: 154px; }
.w8 { width: 154px; }
.w9 { width: 154px; }
.w10 { width: 154px; }
.w11 { width: 98px; }
.w12 { width: 279px; }
.bmmore { flex: none; }

/* page */
.page { flex: 1; min-height: 0; padding-top: 58px; background-image: linear-gradient(135deg, #667eea 0%, #764ba2 100%); background-size: 100% 736px; background-repeat: repeat; }
.card { width: 680px; margin: 0 auto; padding: 40px; border-radius: 15px; background: rgba(255, 255, 255, .1); color: #fff; text-align: center; font-family: "Liberation Sans", Arial, sans-serif; font-size: 19.2px; line-height: 22px; }
.title { margin: 33px 0 21px; padding-left: 8px; font-size: 40px; line-height: 46px; font-weight: 700; display: flex; justify-content: center; align-items: center; gap: 21px; }
.emoji-title { width: 38px; height: 40px; }
.success { height: 82px; padding-top: 19px; border: 2px solid #0f0; border-radius: 10px; background: rgba(0, 255, 0, .2); }
.success-head { display: flex; justify-content: center; align-items: center; gap: 10px; padding-left: 3px; }
.emoji-check { width: 18px; height: 18px; }
.info { margin-top: 20px; padding: 15px 0; border-radius: 10px; background: rgba(255, 255, 255, .2); }
.note { margin: 20px 0 36px; font-size: 16px; line-height: 18px; }
.actions { display: flex; flex-direction: column; align-items: center; gap: 40px; padding-bottom: 20px; }
.btn { height: 54px; padding: 0 30px; border-radius: 25px; background: #ff6b6b; color: #fff; text-decoration: none; display: flex; align-items: center; gap: 8px; font-size: 17.6px; }
.emoji-btn { width: 18px; height: 20px; margin-left: 3px; }

/* taskbar */
.taskbar { height: 48px; flex: none; display: grid; grid-template-columns: 507px 1fr auto; align-items: center; background: linear-gradient(90deg, #e9ebe2 0%, #e6ece8 35%, #ecebd9 48%, #e6ecea 70%, #deebf2 100%); color: #1a1a1a; font-size: 12px; padding-right: 19px; font-family: "Noto Sans", sans-serif; }
.weather { display: flex; align-items: center; gap: 9px; padding-left: 20px; }
.weathericon { width: 21px; height: 22px; border-radius: 50%; background: linear-gradient(160deg, #f6b21b, #ee6d12); position: relative; display: block; }
.badge { position: absolute; left: 9px; top: -6px; width: 16px; height: 16px; border-radius: 50%; background: #c42b1c; color: #fff; font-size: 11px; line-height: 16px; text-align: center; }
.weathertext { line-height: 16px; font-size: 11.5px; }
.muted { color: #555; }
.taskcenter { display: flex; align-items: center; }
.winlogo { width: 23px; height: 23px; }
.searchbox { width: 220px; height: 31px; margin-left: 13px; border-radius: 16px; background: #f9f9f1; border: 1px solid #e3e3da; display: flex; align-items: center; gap: 10px; padding-left: 10px; color: #555; font-size: 13px; }
.taskview { width: 23px; height: 23px; margin: 0 11px 0 12px; }
.ti { width: 44px; height: 38px; display: flex; align-items: center; justify-content: center; position: relative; }
.ticon { width: 24px; height: 24px; }
.m365 { font: 700 5.6px "Liberation Mono", monospace; fill: #fff; }
.ti.on::after { content: ""; position: absolute; left: 19px; bottom: 0; width: 6px; height: 3px; border-radius: 2px; background: #777; }
.chrome-ti { background: #f5f4ec; border-radius: 5px; box-shadow: inset 0 0 0 1px #ecebe2; }
.chrome-ti::after { content: ""; position: absolute; left: 10px; bottom: 0; width: 24px; height: 3px; border-radius: 2px; background: #555; }
.overlay-avatar { position: absolute; right: 8px; top: 2px; width: 14px; height: 14px; }
.tray { display: flex; align-items: center; }
.traych { margin-right: 18px; }
.onedrive { width: 17px; height: 12px; margin-right: 12px; }
.lang { width: 36px; text-align: center; line-height: 16px; margin-right: 12px; }
.net { margin-right: 6px; }
.spk { margin-right: 14px; }
.clock { width: 66px; text-align: right; line-height: 16px; }
```
